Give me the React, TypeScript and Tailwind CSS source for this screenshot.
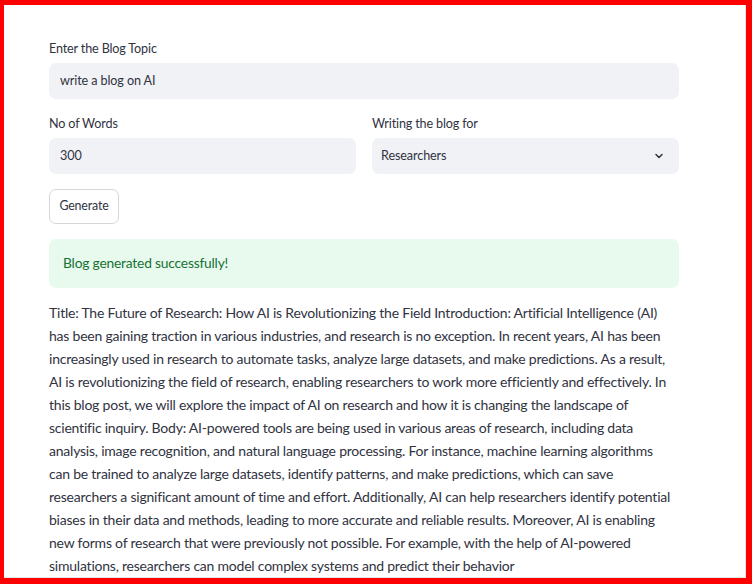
const bodyLines = [
  "Title: The Future of Research: How AI is Revolutionizing the Field Introduction: Artificial Intelligence (AI)",
  "has been gaining traction in various industries, and research is no exception. In recent years, AI has been",
  "increasingly used in research to automate tasks, analyze large datasets, and make predictions. As a result,",
  "AI is revolutionizing the field of research, enabling researchers to work more efficiently and effectively. In",
  "this blog post, we will explore the impact of AI on research and how it is changing the landscape of",
  "scientific inquiry. Body: AI-powered tools are being used in various areas of research, including data",
  "analysis, image recognition, and natural language processing. For instance, machine learning algorithms",
  "can be trained to analyze large datasets, identify patterns, and make predictions, which can save",
  "researchers a significant amount of time and effort. Additionally, AI can help researchers identify potential",
  "biases in their data and methods, leading to more accurate and reliable results. Moreover, AI is enabling",
  "new forms of research that were previously not possible. For example, with the help of AI-powered",
  "simulations, researchers can model complex systems and predict their behavior",
];

function Label({ children }: { children: React.ReactNode }) {
  return (
    <div className="flex h-[21px] items-center text-[12.6px] tracking-[-0.15px]">{children}</div>
  );
}

function Field({ value, select }: { value: string; select?: boolean }) {
  return (
    <div
      className={`mt-[3px] flex h-[36px] items-center justify-between rounded-[7px] bg-[#f0f2f6] pr-[14px] text-[12.6px] tracking-[-0.1px] ${
        select ? "pl-[9px]" : "pl-[11px]"
      }`}
    >
      <span>{value}</span>
      {select && (
        <svg width="12" height="12" viewBox="0 0 24 24" fill="none" stroke="#31333f" strokeWidth="3" strokeLinecap="round" strokeLinejoin="round">
          <path d="M6 9l6 6 6-6" />
        </svg>
      )}
    </div>
  );
}

export default function App() {
  return (
    <div
      className="h-[584px] w-[752px] overflow-hidden border-solid border-[#ff0000] border-t-[5px] border-l-[4px] border-r-[6px] border-b-[6px] bg-white text-[#31333f]"
      style={{ fontFamily: "Lato, 'Liberation Sans', sans-serif" }}
    >
      <div className="h-full border-r border-b border-[#e6e6e6] pl-[45px] pt-[34px]">
        <div className="w-[630px]">
          <Label>Enter the Blog Topic</Label>
          <Field value="write a blog on AI" />

          <div className="mt-[15px] grid grid-cols-2 gap-[16px]">
            <div>
              <Label>No of Words</Label>
              <Field value="300" />
            </div>
            <div>
              <Label>Writing the blog for</Label>
              <Field value="Researchers" select />
            </div>
          </div>

          <button className="mt-[15px] flex h-[35px] w-[70px] items-center justify-center rounded-[7px] border border-[#d6d6d9] bg-white text-[12.4px] tracking-[-0.15px]">
            Generate
          </button>

          <div className="mt-[15px] flex h-[49px] items-center rounded-[7px] bg-[#e8f9ee] px-[14px] text-[13.8px] tracking-[-0.2px] text-[#177233]">
            Blog generated successfully!
          </div>

          <div className="mt-[13px] text-[14px] leading-[23px] tracking-[-0.22px]">
            {bodyLines.map((l, i) => (
              <div key={i} className="whitespace-nowrap">
                {l}
              </div>
            ))}
          </div>
        </div>
      </div>
    </div>
  );
}
